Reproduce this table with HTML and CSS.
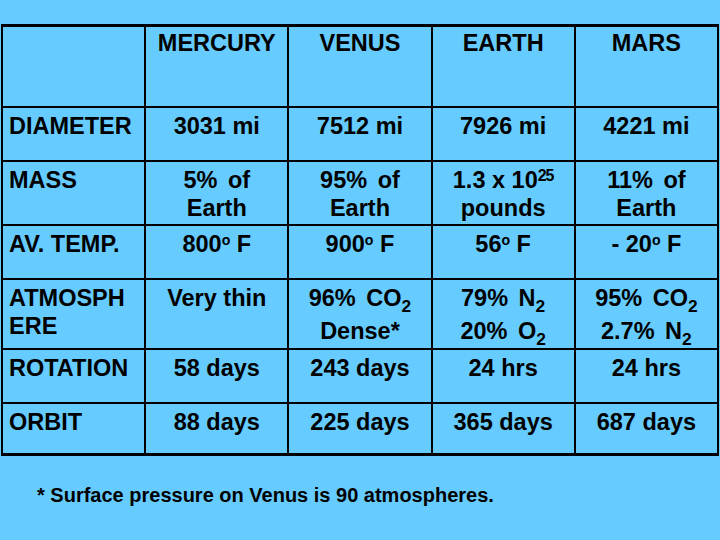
FILE: index.html
```html
<!DOCTYPE html>
<html>
<head>
<meta charset="utf-8">
<link rel="stylesheet" href="styles.css">
</head>
<body>
<table class="planets">
  <tr class="r-head">
    <td></td>
    <td class="c">MERCURY</td>
    <td class="c">VENUS</td>
    <td class="c">EARTH</td>
    <td class="c">MARS</td>
  </tr>
  <tr class="r-diam">
    <td>DIAMETER</td>
    <td class="c">3031 mi</td>
    <td class="c">7512 mi</td>
    <td class="c">7926 mi</td>
    <td class="c">4221 mi</td>
  </tr>
  <tr class="r-mass">
    <td>MASS</td>
    <td class="c"><span class="ws">5% of</span><br>Earth</td>
    <td class="c"><span class="ws">95% of</span><br>Earth</td>
    <td class="c">1.3 x 10<sup class="exp">25</sup><br>pounds</td>
    <td class="c"><span class="ws">11% of</span><br>Earth</td>
  </tr>
  <tr class="r-temp">
    <td>AV. TEMP.</td>
    <td class="c">800<sup class="deg">o</sup> F</td>
    <td class="c">900<sup class="deg">o</sup> F</td>
    <td class="c">56<sup class="deg">o</sup> F</td>
    <td class="c">- 20<sup class="deg">o</sup> F</td>
  </tr>
  <tr class="r-atm">
    <td>ATMOSPH<br>ERE</td>
    <td class="c">Very thin</td>
    <td class="c gas"><span class="ws">96% CO<sub>2</sub></span><br>Dense*</td>
    <td class="c gas"><span class="ws">79% N<sub>2</sub></span><br><span class="ws">20% O<sub>2</sub></span></td>
    <td class="c gas"><span class="ws">95% CO<sub>2</sub></span><br><span class="ws">2.7% N<sub>2</sub></span></td>
  </tr>
  <tr class="r-rot">
    <td>ROTATION</td>
    <td class="c">58 days</td>
    <td class="c">243 days</td>
    <td class="c">24 hrs</td>
    <td class="c">24 hrs</td>
  </tr>
  <tr class="r-orb">
    <td>ORBIT</td>
    <td class="c">88 days</td>
    <td class="c">225 days</td>
    <td class="c">365 days</td>
    <td class="c">687 days</td>
  </tr>
</table>
<p class="note">* Surface pressure on Venus is 90 atmospheres.</p>
</body>
</html>
```
FILE: styles.css
```css
html, body {
  margin: 0;
  padding: 0;
  background: #66ccff;
}
body {
  width: 720px;
  height: 540px;
  overflow: hidden;
  font-family: "Liberation Sans", Arial, sans-serif;
  font-weight: bold;
  color: #000;
}
.planets {
  margin: 24px 0 0 1px;
  width: 718px;
  table-layout: fixed;
  border-collapse: collapse;
  border-top: 3px solid #000;
  border-bottom: 3px solid #000;
  font-size: 23.5px;
  line-height: 28px;
}
.planets td {
  border: 2px solid #000;
  vertical-align: top;
  padding: 4px 0 0 6px;
  box-sizing: border-box;
  white-space: nowrap;
}
.planets td.c {
  text-align: center;
  padding-left: 0;
}
.planets tr:first-child td { border-top-width: 3px; }
.planets tr:last-child td { border-bottom-width: 3px; }
.r-head td { height: 81px; padding-top: 2px !important; }
.r-diam td { height: 54px; }
.r-mass td { height: 64px; }
.r-temp td { height: 54px; }
.r-atm td { height: 70px; }
.r-rot td { height: 54px; }
.r-orb td { height: 52px; }
.gas { line-height: 33px; padding-top: 2px !important; }
.ws { word-spacing: 4px; }
sub {
  font-size: 0.74em;
  vertical-align: -0.32em;
  line-height: 0;
}
sup.exp {
  font-size: 0.68em;
  vertical-align: 0.45em;
  line-height: 0;
  letter-spacing: -1px;
}
sup.deg {
  font-size: 0.6em;
  vertical-align: 0.5em;
  line-height: 0;
}
.note {
  margin: 27px 0 0 37px;
  font-size: 20px;
  line-height: 24px;
}
```
